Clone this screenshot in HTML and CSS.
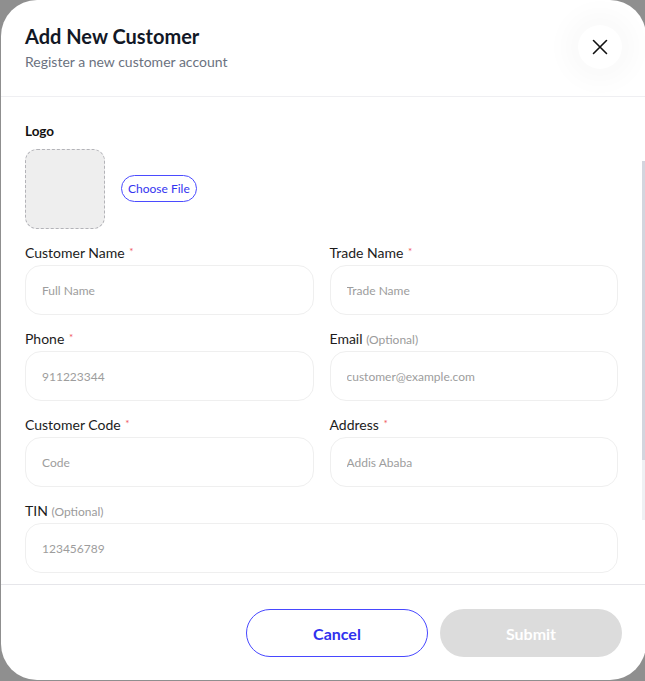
FILE: index.html
```html
<!DOCTYPE html>
<html lang="en">
<head>
<meta charset="utf-8">
<title>Add New Customer</title>
<link rel="stylesheet" href="styles.css">
</head>
<body>
<div class="modal">
  <header class="modal-header">
    <div class="titles">
      <h1 class="title">Add New Customer</h1>
      <p class="subtitle">Register a new customer account</p>
    </div>
    <button class="close-btn" type="button" aria-label="Close">
      <svg width="18" height="18" viewBox="0 0 18 18" fill="none" stroke="#111" stroke-width="1.6" stroke-linecap="round"><path d="M2.5 2.5 L15.5 15.5 M15.5 2.5 L2.5 15.5"/></svg>
    </button>
  </header>
  <div class="modal-body">
    <div class="scroll-content">
      <div class="logo-section">
        <div class="label strong">Logo</div>
        <div class="logo-row">
          <div class="logo-box"></div>
          <button class="choose-btn" type="button">Choose File</button>
        </div>
      </div>
      <div class="form-grid">
        <div class="field">
          <div class="label">Customer Name <span class="req">*</span></div>
          <input class="input" placeholder="Full Name">
        </div>
        <div class="field">
          <div class="label">Trade Name <span class="req">*</span></div>
          <input class="input" placeholder="Trade Name">
        </div>
        <div class="field">
          <div class="label">Phone <span class="req">*</span></div>
          <input class="input" placeholder="911223344">
        </div>
        <div class="field">
          <div class="label">Email <span class="opt">(Optional)</span></div>
          <input class="input" placeholder="customer@example.com">
        </div>
        <div class="field">
          <div class="label">Customer Code <span class="req">*</span></div>
          <input class="input" placeholder="Code">
        </div>
        <div class="field">
          <div class="label">Address <span class="req">*</span></div>
          <input class="input" placeholder="Addis Ababa">
        </div>
        <div class="field span2">
          <div class="label">TIN <span class="opt">(Optional)</span></div>
          <input class="input" placeholder="123456789">
        </div>
      </div>
    </div>
    <div class="scrollbar" aria-hidden="true">
      <div class="scroll-thumb"></div>
      <div class="scroll-track"></div>
    </div>
  </div>
  <footer class="modal-footer">
    <button class="btn btn-cancel" type="button">Cancel</button>
    <button class="btn btn-submit" type="button" disabled>Submit</button>
  </footer>
</div>
</body>
</html>
```

FILE: styles.css
```css
* { box-sizing: border-box; }
html, body { margin: 0; padding: 0; }
body {
  background: #8f8f8f;
  overflow: hidden;
  width: 645px;
  height: 681px;
  font-family: Lato, "Noto Sans", sans-serif;
}
.modal {
  margin-left: 1px;
  width: 645px;
  height: 680px;
  background: #fff;
  border-radius: 36px;
  display: flex;
  flex-direction: column;
  overflow: hidden;
}
.modal-header {
  display: flex;
  justify-content: space-between;
  align-items: center;
  padding: 24px;
  border-bottom: 1px solid #efeff2;
  height: 97px;
  flex: none;
}
.title {
  margin: 0;
  font-size: 20px;
  line-height: 24px;
  font-weight: 700;
  color: #121826;
}
.subtitle {
  margin: 4px 0 0;
  font-size: 14px;
  line-height: 20px;
  color: #6b7280;
}
.close-btn {
  width: 44px;
  height: 44px;
  border-radius: 50%;
  border: none;
  background: #fff;
  display: flex;
  align-items: center;
  justify-content: center;
  padding: 0;
  box-shadow: 0 0 24px 14px rgba(0, 0, 0, 0.025);
  margin-top: -2px;
}
.modal-body {
  flex: 1;
  display: flex;
  min-height: 0;
}
.scroll-content {
  flex: 1;
  padding: 26px 24px 0 24px;
}
.scrollbar {
  width: 4px;
  flex: none;
  display: flex;
  flex-direction: column;
  padding: 64px 0;
}
.scroll-thumb { height: 299px; background: #d3d5de; }
.scroll-track { flex: 1; background: #eff0f3; }
.label {
  font-size: 14px;
  line-height: 16px;
  height: 16px;
  color: #1c1c1c;
  margin-bottom: 4px;
  white-space: nowrap;
}
.label.strong { font-weight: 700; color: #111; margin-bottom: 10px; font-size: 13.5px; }
.req {
  color: #f0555a;
  font-size: 10px;
  vertical-align: 3px;
  line-height: 0;
  margin-left: 1px;
}
.opt {
  color: #9b9b9b;
  font-size: 12px;
}
.logo-row {
  display: flex;
  align-items: center;
  gap: 16px;
}
.logo-box {
  width: 80px;
  height: 80px;
  border-radius: 12px;
  background: #eeeeee;
  border: 1px dashed #b3b3b8;
}
.choose-btn {
  height: 27px;
  padding: 0 6px;
  border: 1px solid #4b4bff;
  border-radius: 14px;
  background: #fff;
  color: #3434f0;
  font-family: inherit;
  font-size: 12px;
  margin-top: -1px;
}
.logo-section { margin-bottom: 16px; }
.form-grid {
  display: grid;
  grid-template-columns: 1fr 1fr;
  column-gap: 16px;
  row-gap: 16px;
}
.span2 { grid-column: 1 / span 2; }
.input {
  display: block;
  width: 100%;
  height: 50px;
  border: 1px solid #efefef;
  border-radius: 16px;
  padding: 0 16px;
  font-family: inherit;
  font-size: 12px;
  color: #222;
  background: #fff;
  outline: none;
}
.input::placeholder { color: #9d9d9d; }
.modal-footer {
  flex: none;
  border-top: 1px solid #e6e6ea;
  padding: 24px 24px 23px;
  display: flex;
  justify-content: flex-end;
  gap: 12px;
}
.btn {
  width: 182px;
  height: 48px;
  border-radius: 24px;
  font-family: inherit;
  font-size: 16px;
  font-weight: 700;
}
.btn-cancel {
  background: #fff;
  border: 1px solid #4848ff;
  color: #3131ee;
}
.btn-submit {
  background: #dcdcdc;
  border: none;
  color: #fff;
}
```
